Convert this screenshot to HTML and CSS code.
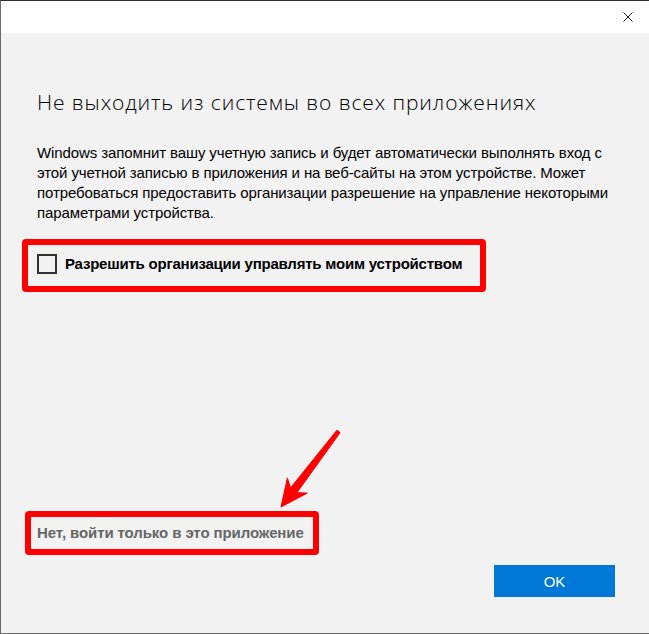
FILE: index.html
```html
<!DOCTYPE html>
<html lang="ru">
<head>
<meta charset="utf-8">
<title>Не выходить из системы</title>
<link rel="stylesheet" href="styles.css">
</head>
<body>
<div class="window">
  <div class="titlebar">
    <span class="close" aria-label="Закрыть">
      <svg width="10" height="10" viewBox="0 0 10 10"><path d="M0.5 0.5 L9.5 9.5 M9.5 0.5 L0.5 9.5" stroke="#1a1a1a" stroke-width="1" fill="none"/></svg>
    </span>
  </div>
  <div class="content">
    <h1 class="title">Не выходить из системы во всех приложениях</h1>
    <p class="desc">Windows запомнит вашу учетную запись и будет автоматически выполнять вход с этой учетной записью в приложения и на веб-сайты на этом устройстве. Может потребоваться предоставить организации разрешение на управление некоторыми параметрами устройства.</p>
    <div class="mark mark-check">
      <label class="check-row">
        <span class="checkbox"></span>
        <span class="check-label">Разрешить организации управлять моим устройством</span>
      </label>
    </div>
    <div class="spacer"></div>
    <div class="mark mark-link">
      <span class="link">Нет, войти только в это приложение</span>
    </div>
    <div class="actions">
      <button class="ok">OK</button>
    </div>
  </div>
  <svg class="arrow" width="649" height="634" viewBox="0 0 649 634">
    <polygon points="281,507 287.4,477.9 290.5,487.9 336.9,430.2 340.1,432.6 296.9,492.7 307.3,493.1" fill="#ff0000" stroke="#ff0000" stroke-width="1" stroke-linejoin="round"/>
  </svg>
</div>
</body>
</html>
```

FILE: styles.css
```css
html, body {
  margin: 0;
  padding: 0;
}
body {
  width: 649px;
  height: 634px;
  overflow: hidden;
  font-family: "Liberation Sans", Arial, sans-serif;
  color: #000;
}
.window {
  position: relative;
  box-sizing: border-box;
  width: 649px;
  height: 634px;
  border-top: 1px solid #2b2b2b;
  border-left: 1px solid #6b6b6b;
  border-bottom: 1px solid #6b6b6b;
  display: flex;
  flex-direction: column;
  background: #f2f2f2;
}
.titlebar {
  height: 32px;
  background: #ffffff;
  display: flex;
  justify-content: flex-end;
  align-items: center;
  padding-right: 16px;
}
.close {
  display: flex;
  width: 10px;
  height: 10px;
}
.content {
  flex: 1;
  display: flex;
  flex-direction: column;
  padding: 0 34px 36px 36px;
}
.title {
  font-family: "Open Sans", "Noto Sans", sans-serif;
  font-weight: 300;
  font-size: 21px;
  line-height: 28px;
  letter-spacing: 0.9px;
  margin: 55px 0 0 0;
  color: #000;
}
.desc {
  font-size: 15px;
  line-height: 20px;
  letter-spacing: -0.1px;
  margin: 27px 0 0 0;
  color: #000;
}
.mark {
  border: 6px solid #ff0000;
  border-radius: 4px;
  box-sizing: border-box;
}
.mark-check {
  width: 464px;
  margin: 16px 0 0 -15px;
  padding: 9px 0 12px 9px;
}
.check-row {
  display: flex;
  align-items: center;
  gap: 8px;
}
.checkbox {
  width: 20px;
  height: 20px;
  box-sizing: border-box;
  border: 2px solid #333;
  flex: none;
}
.check-label {
  font-weight: bold;
  font-size: 15px;
  line-height: 20px;
  letter-spacing: -0.22px;
}
.spacer {
  flex: 1;
}
.mark-link {
  width: 294px;
  height: 44px;
  margin-left: -12px;
  padding-left: 6px;
  display: flex;
  align-items: center;
}
.link {
  font-weight: bold;
  font-size: 15px;
  line-height: 20px;
  letter-spacing: -0.1px;
  color: #666666;
}
.actions {
  display: flex;
  justify-content: flex-end;
  margin-top: 10px;
}
.ok {
  width: 121px;
  height: 32px;
  border: none;
  background: #0078d7;
  color: #fff;
  font-family: "Liberation Sans", Arial, sans-serif;
  font-size: 15px;
  padding: 0;
}
.arrow {
  position: absolute;
  left: -1px;
  top: -1px;
  pointer-events: none;
}
```
